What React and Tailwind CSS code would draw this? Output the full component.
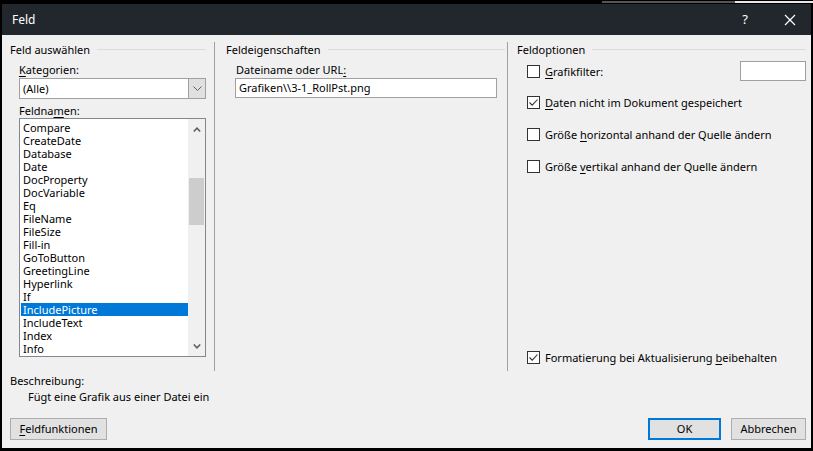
import React from 'react';

const font = { fontFamily: '"Noto Sans", "Open Sans", sans-serif' };

// thin-stroke checkbox like the Win10 one
const CheckBox = ({ checked }) => (
  <div className="w-[13px] h-[13px] border border-[#333333] bg-white flex items-center justify-center shrink-0">
    {checked && (
      <svg width="11" height="11" viewBox="0 0 11 11">
        <path d="M1.5 5.5 L4.2 8.2 L9.5 2.5" fill="none" stroke="#333333" strokeWidth="1.1" />
      </svg>
    )}
  </div>
);

const GroupHeader = ({ title }) => (
  <div className="flex items-center h-[15px] gap-[7px]">
    <span className="leading-[15px] whitespace-nowrap">{title}</span>
    <div className="flex-1 h-px bg-[#dcdcdc]" />
  </div>
);

const fieldNames = [
  'Compare', 'CreateDate', 'Database', 'Date', 'DocProperty', 'DocVariable', 'Eq',
  'FileName', 'FileSize', 'Fill-in', 'GoToButton', 'GreetingLine', 'Hyperlink', 'If',
  'IncludePicture', 'IncludeText', 'Index', 'Info',
];

const OptionRow = ({ checked, children }) => (
  <div className="flex items-center h-[20px] pl-[10px] gap-[5px]">
    <CheckBox checked={checked} />
    <span className="leading-[15px] whitespace-nowrap">{children}</span>
  </div>
);

export default function App() {
  return (
    <div className="w-[813px] h-[451px] bg-black flex flex-col text-[11px] text-black" style={font}>
      {/* strip of the window behind */}
      <div className="h-[4px] flex items-start">
        <div className="flex-1" />
        <div className="w-[133px] h-[2px] mt-[1px] bg-[#555555]" />
        <div className="w-[78px] h-[2px] mt-[1px] bg-[#e8e8e8]" />
      </div>

      <div className="flex-1 flex flex-col ml-[2px] mr-[2px] mb-[3px]">
        {/* Title bar */}
        <div className="h-[31px] bg-[#22272d] flex items-center text-white">
          <span className="pl-[10px] text-[12px]">Feld</span>
          <div className="flex-1" />
          <span className="text-[13px] mr-[36px]">?</span>
          <svg width="12" height="12" viewBox="0 0 12 12" className="mr-[15px]">
            <path d="M1 1 L11 11 M11 1 L1 11" stroke="#ffffff" strokeWidth="1.2" />
          </svg>
        </div>

        {/* Body */}
        <div className="flex-1 bg-[#f0f0f0] flex flex-col">
          <div className="flex pt-[7px] pl-[8px] h-[336px]">
            {/* Feld auswählen */}
            <div className="w-[196px] flex flex-col">
              <GroupHeader title="Feld auswählen" />
              <div className="pl-[9px] mt-[5px] h-[15px] leading-[15px]">
                <u className="underline-offset-2">K</u>ategorien:
              </div>
              <div className="ml-[9px] mt-[1px] h-[21px] border border-[#a0a0a0] bg-white flex">
                <span className="flex-1 pl-[3px] leading-[19px]">(Alle)</span>
                <div className="w-[17px] bg-[#e0e0e0] border-l border-[#a0a0a0] flex items-center justify-center">
                  <svg width="9" height="5" viewBox="0 0 9 5">
                    <path d="M0.5 0.5 L4.5 4.5 L8.5 0.5" fill="none" stroke="#606060" strokeWidth="1" />
                  </svg>
                </div>
              </div>
              <div className="pl-[9px] mt-[4px] h-[15px] leading-[15px]">
                Feldna<u className="underline-offset-2">m</u>en:
              </div>
              <div className="ml-[9px] h-[239px] border border-[#828790] bg-white flex">
                <div className="flex-1 pt-[2px] pl-[1px] overflow-hidden">
                  {fieldNames.map((n) => (
                    <div
                      key={n}
                      className={`h-[13px] leading-[13px] pl-[2px] whitespace-nowrap ${
                        n === 'IncludePicture' ? 'bg-[#0078d7] text-white' : ''
                      }`}
                    >
                      {n}
                    </div>
                  ))}
                </div>
                <div className="w-[17px] bg-[#f0f0f0] flex flex-col items-center">
                  <div className="h-[17px] flex items-center justify-center mt-[2px]">
                    <svg width="8" height="5" viewBox="0 0 8 5">
                      <path d="M0.8 4.5 L4 1.2 L7.2 4.5" fill="none" stroke="#606060" strokeWidth="1.6" />
                    </svg>
                  </div>
                  <div className="w-[15px] h-[47px] bg-[#cdcdcd] mt-[40px]" />
                  <div className="flex-1" />
                  <div className="h-[17px] flex items-center justify-center mb-[1px]">
                    <svg width="8" height="5" viewBox="0 0 8 5">
                      <path d="M0.8 0.5 L4 3.8 L7.2 0.5" fill="none" stroke="#606060" strokeWidth="1.6" />
                    </svg>
                  </div>
                </div>
              </div>
            </div>

            <div className="w-px bg-[#a0a0a0] ml-[8px] h-[329px]" />

            {/* Feldeigenschaften */}
            <div className="w-[292px] pl-[11px] pr-[2px] flex flex-col">
              <GroupHeader title="Feldeigenschaften" />
              <div className="pl-[10px] mt-[5px] h-[15px] leading-[15px]">
                Dateiname oder URL<u className="underline-offset-2">:</u>
              </div>
              <div className="ml-[9px] mr-[8px] mt-[1px] h-[20px] border border-[#a0a0a0] bg-white pl-[3px] leading-[18px]">
                Grafiken\\3-1_RollPst.png
              </div>
            </div>

            <div className="w-px bg-[#a0a0a0] h-[329px]" />

            {/* Feldoptionen */}
            <div className="flex-1 pl-[9px] pr-[5px] flex flex-col h-[329px]">
              <GroupHeader title="Feldoptionen" />
              <div className="flex items-center h-[20px] mt-[4px]">
                <OptionRow>
                  <u className="underline-offset-2">G</u>rafikfilter:
                </OptionRow>
                <div className="flex-1" />
                <div className="w-[66px] h-[20px] border border-[#a0a0a0] bg-white" />
              </div>
              <div className="mt-[11px]">
                <OptionRow checked>
                  <u className="underline-offset-2">D</u>aten nicht im Dokument gespeichert
                </OptionRow>
              </div>
              <div className="mt-[12px]">
                <OptionRow>
                  Größe <u className="underline-offset-2">h</u>orizontal anhand der Quelle ändern
                </OptionRow>
              </div>
              <div className="mt-[12px]">
                <OptionRow>
                  Größe <u className="underline-offset-2">v</u>ertikal anhand der Quelle ändern
                </OptionRow>
              </div>
              <div className="mt-auto mb-[4px]">
                <OptionRow checked>
                  Formatierung bei Aktualisierung <u className="underline-offset-2">b</u>eibehalten
                </OptionRow>
              </div>
            </div>
          </div>

          {/* Beschreibung */}
          <div className="pl-[8px] h-[15px] leading-[15px] mt-[2px]">Beschreibung:</div>
          <div className="pl-[26px] h-[15px] leading-[15px] mt-px">Fügt eine Grafik aus einer Datei ein</div>

          {/* Buttons */}
          <div className="flex items-center mt-[14px] pl-[8px] pr-[5px]">
            <button className="w-[97px] h-[22px] border border-[#adadad] bg-[#e1e1e1] text-[11px]">
              <u className="underline-offset-2">F</u>eldfunktionen
            </button>
            <div className="flex-1" />
            <button className="w-[73px] h-[22px] border-2 border-[#0078d7] bg-[#e1e1e1] text-[11px]">
              OK
            </button>
            <button className="w-[75px] h-[22px] ml-[10px] border border-[#adadad] bg-[#e1e1e1] text-[11px]">
              Abbrechen
            </button>
          </div>
        </div>
      </div>
    </div>
  );
}
